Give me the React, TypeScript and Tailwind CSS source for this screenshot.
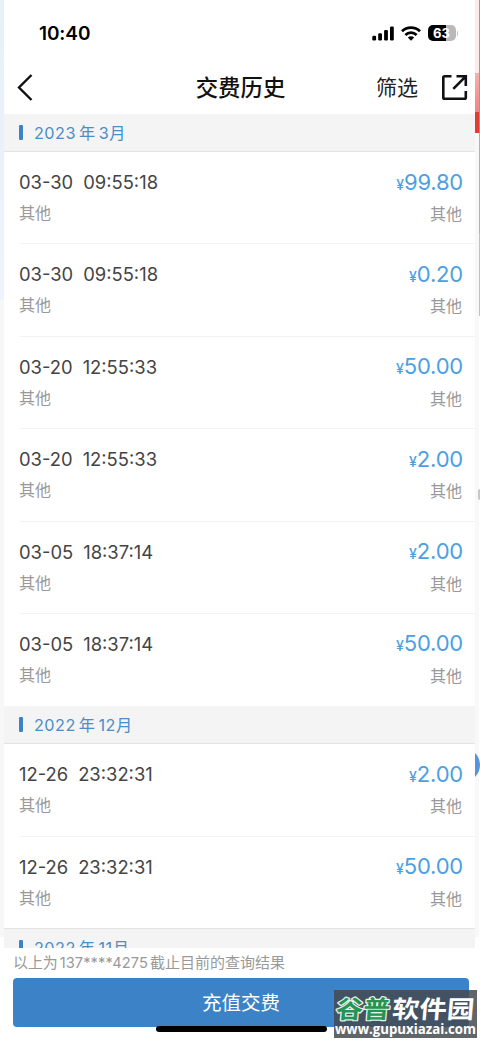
import React from "react";

type Payment = { date: string; time: string; amount: string };

const march: Payment[] = [
  { date: "03-30", time: "09:55:18", amount: "99.80" },
  { date: "03-30", time: "09:55:18", amount: "0.20" },
  { date: "03-20", time: "12:55:33", amount: "50.00" },
  { date: "03-20", time: "12:55:33", amount: "2.00" },
  { date: "03-05", time: "18:37:14", amount: "2.00" },
  { date: "03-05", time: "18:37:14", amount: "50.00" },
];

const december: Payment[] = [
  { date: "12-26", time: "23:32:31", amount: "2.00" },
  { date: "12-26", time: "23:32:31", amount: "50.00" },
];

function StatusBar() {
  return (
    <div className="flex h-[60px] items-center justify-between pt-[6px] pr-[17px] pl-[35px]">
      <span className="pt-px text-[19px] leading-6 font-semibold tracking-[-0.1px] text-black">10:40</span>
      <div className="flex items-center gap-[7px]">
        <svg width="22" height="15" viewBox="0 0 22 15">
          <rect x="0.3" y="9.7" width="3.8" height="4.8" rx="1.2" />
          <rect x="6.2" y="7.2" width="3.8" height="7.3" rx="1.2" />
          <rect x="12.1" y="4" width="3.8" height="10.5" rx="1.2" />
          <rect x="18" y="0.5" width="3.8" height="14" rx="1.2" />
        </svg>
        <svg width="20" height="15" viewBox="0 0 20 15" fill="none" stroke="#000" strokeWidth="2.8">
          <path d="M1 5.2C6 .5 14 .5 19 5.2" />
          <path d="M4.4 8.9C7.6 5.9 12.4 5.9 15.6 8.9" />
          <path d="M6.8 11.4Q10 9 13.2 11.4L10 14.7Z" fill="#000" stroke="none" />
        </svg>
        <div className="flex items-center gap-px">
          <div className="flex h-4 w-[28px] items-center justify-center rounded-[5px] bg-linear-to-r from-black from-63% to-[#b9b9b9] to-63% text-[13px] leading-none font-bold text-white">
            63
          </div>
          <div className="h-[5px] w-[1.5px] rounded-r bg-[#c4c4c4]" />
        </div>
      </div>
    </div>
  );
}

function NavBar() {
  return (
    <div className="grid h-[54px] grid-cols-[1fr_auto_1fr] items-center pr-[7px] pl-[13px]">
      <svg width="16" height="27" viewBox="0 0 16 27" fill="none" stroke="#111" strokeWidth="2.4">
        <path d="M14.5 1L2 13.5L14.5 26" />
      </svg>
      <h1 className="mr-[4px] pt-0.5 text-[22.4px] leading-7 font-medium text-[#111]">交费历史</h1>
      <div className="flex items-center justify-end gap-[23px]">
        <span className="pt-0.5 text-[21px] leading-7 text-[#222]">筛选</span>
        <svg width="27" height="27" viewBox="0 0 27 27" fill="none" stroke="#111" strokeWidth="2.6">
          <path d="M10.5 2.3H3.5Q2.3 2.3 2.3 3.5V23.5Q2.3 24.8 3.5 24.8H23.5Q24.8 24.8 24.8 23.5V17" />
          <path d="M15.5 2.3H24.8V12M24.5 2.6L12.3 14.8" />
        </svg>
      </div>
    </div>
  );
}

function MonthHeader({ children }: { children: React.ReactNode }) {
  return (
    <div className="flex h-[38px] shrink-0 items-center gap-[11px] border-b border-[#e4e4e4] bg-[#f4f4f4] pl-[15px]">
      <div className="h-[15px] w-1 rounded-[1px] bg-[#3c82c5]" />
      <span className="flex items-center gap-[3px] pt-px text-[16.2px] leading-6 tracking-[0.5px] text-[#4a8dc8]">{children}</span>
    </div>
  );
}

function PaymentRow({ item, last }: { item: Payment; last: boolean }) {
  return (
    <div className="h-[92.4px] pl-4">
      <div className={`h-full pt-[17px] pr-[13px] ${last ? "" : "border-b border-[#f3f3f3]"}`}>
        <div className="flex h-7 items-center justify-between">
          <span className="-ml-px flex gap-[10px] pb-0.5 text-[18.4px] leading-7 text-[#444]">
            <span>{item.date}</span>
            <span>{item.time}</span>
          </span>
          <span className="flex items-baseline text-[#4d9fe2]">
            <span className="text-[14px] leading-7 font-medium">¥</span>
            <span className="-mr-px text-[22px] leading-7 tracking-[-0.2px]">{item.amount}</span>
          </span>
        </div>
        <div className="flex justify-between pt-0.5 text-[16px] leading-7 text-[#999]">
          <span className="-ml-px">其他</span>
          <span className="pt-px">其他</span>
        </div>
      </div>
    </div>
  );
}

function PaymentList({ items }: { items: Payment[] }) {
  return (
    <div className="shrink-0 bg-white">
      {items.map((item, i) => (
        <PaymentRow key={i} item={item} last={i === items.length - 1} />
      ))}
    </div>
  );
}

function Watermark() {
  return (
    <div className="absolute top-[990px] left-[334px] h-12 w-[143px] overflow-hidden bg-[#444a50]/85">
      <svg width="143" height="48" viewBox="0 0 143 48">
        <g
          fontFamily="'Noto Sans CJK SC', sans-serif"
          fontWeight="700"
          fontSize="24.5"
          strokeLinejoin="round"
          transform="translate(4 0) skewX(-5)"
        >
          <text x="0" y="28" textLength="54" lengthAdjust="spacingAndGlyphs" fill="#259352" stroke="#e6f4eb" strokeWidth="2.4" paintOrder="stroke">谷普</text>
          <text x="56" y="28" textLength="82" lengthAdjust="spacingAndGlyphs" fill="#fff">软件园</text>
        </g>
        <text x="1" y="44" textLength="141" lengthAdjust="spacingAndGlyphs" fill="#fff" fontFamily="'Open Sans', sans-serif" fontWeight="700" fontSize="13.5">www.gupuxiazai.com</text>
      </svg>
    </div>
  );
}

export default function App() {
  return (
    <div className="relative flex h-[1041px] w-[480px] overflow-hidden bg-white font-['Inter','Noto_Sans_CJK_SC',sans-serif]">
      <div className="flex w-1 shrink-0 flex-col">
        <div className="h-[300px] bg-linear-to-b from-[#e5f0fb] to-[#edf4fd]" />
        <div className="h-[637px] bg-[#f7f7f7]" />
      </div>

      <main className="flex w-[471px] shrink-0 flex-col">
        <StatusBar />
        <NavBar />
        <div className="flex h-[834px] flex-col overflow-hidden">
          <MonthHeader><span>2023</span><span>年</span><span>3月</span></MonthHeader>
          <PaymentList items={march} />
          <MonthHeader><span>2022</span><span>年</span><span>12月</span></MonthHeader>
          <PaymentList items={december} />
          <div className="-mt-px shrink-0 border-t border-[#e4e4e4]">
            <MonthHeader><span>2022</span><span>年</span><span>11月</span></MonthHeader>
          </div>
        </div>
        <footer className="px-[9px]">
          <p className="flex h-[30px] items-center gap-[2px] pt-px text-[15px] text-[#999]">
            <span className="tracking-[-0.1px]">以上为</span><span className="text-[14.6px] tracking-[0.1px]">137****4275</span><span>截止目前的查询结果</span>
          </p>
          <button className="flex h-[49px] w-[456px] items-center justify-center rounded bg-[#3b82c7] pt-0.5 text-[19.5px] text-white">
            充值交费
          </button>
        </footer>
      </main>

      <div className="flex w-[5px] shrink-0">
        <div className="flex w-1 flex-col">
          <div className="h-[73px] bg-[#fdebe9]" />
          <div className="h-[39px] bg-linear-to-b from-[#f6b0ac] to-[#f08583]" />
          <div className="h-[21px] bg-[#e43b33]" />
          <div className="h-[804px] bg-[#f8f8f8]" />
        </div>
        <div className="flex w-px flex-col">
          <div className="h-[133px] bg-[#e8805c]" />
          <div className="h-[100px] bg-[#eea35c]" />
          <div className="h-[83px] bg-[#f4bd4c]" />
        </div>
        <div className="absolute top-[748px] left-[475px] h-[34px] w-[5px] overflow-hidden">
          <div className="-ml-[29px] h-[34px] w-[34px] rounded-full bg-[#5594dc]" />
        </div>
        <div className="absolute top-[489px] left-[478px] h-[11px] w-[2px] rounded-l-full bg-[#c7c7c7]" />
      </div>

      <div className="absolute top-[1026px] left-[156px] h-[6px] w-[171px] rounded-full bg-black" />
      <Watermark />
    </div>
  );
}
